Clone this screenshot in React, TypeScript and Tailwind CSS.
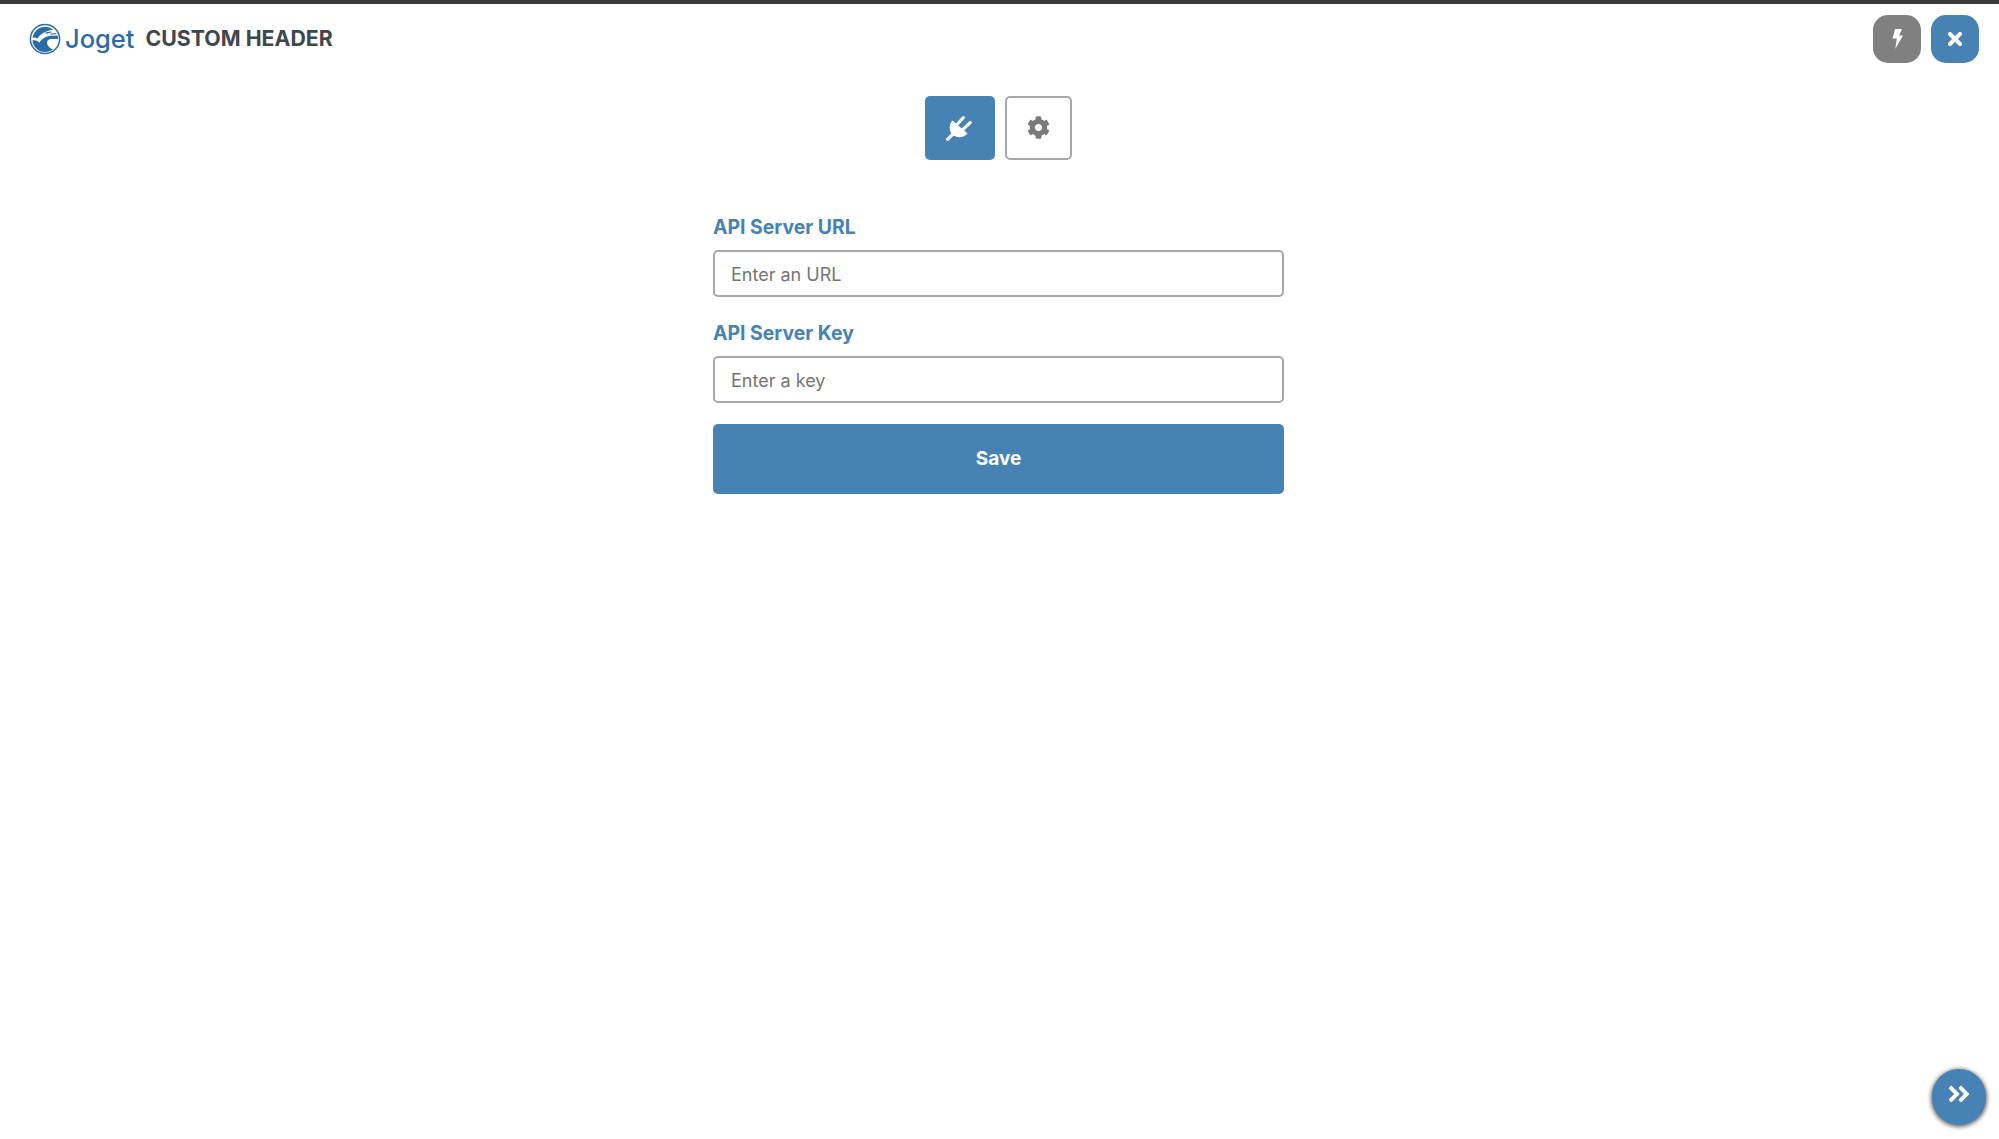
import { FaAngleDoubleRight, FaCog } from "react-icons/fa";

function JogetLogo() {
  return (
    <svg viewBox="0 0 32 32" className="h-[32px] w-[32px] shrink-0" aria-hidden="true">
      <circle cx="16" cy="16" r="14.6" fill="none" stroke="#2b6ca8" strokeWidth="1.5" />
      <path
        d="M3.5 14.5C5 8 10 3.8 16 3.8c3.2 0 6 1.1 8.2 3C19 7.4 12 10 8.5 15.5 7 14.6 5 14.3 3.5 14.5Z"
        fill="#2b6ca8"
      />
      <path
        d="M3.4 17.5c3-.9 5.6.1 7 2.2 2-4 6.6-6.6 11.6-7l6.6-.2c.3 1.1.4 2.3.4 3.5H22c-3 .2-4.8 2.6-3.6 5.4 1 2.400 3.600 4.400 5.800 5.200-2.300 1.600-5 2.500-8.200 2.500-6.600 0-11.800-5-12.600-11.600Z"
        fill="#2b6ca8"
      />
      <path d="M16 9.500l6-1 .8.800-5 1.400Zm5 1.300 6-.8.600.9-5.400.9Z" fill="#2b6ca8" />
    </svg>
  );
}

function BoltIcon() {
  return (
    <svg viewBox="0 0 11 20" className="h-[20px] w-[11px]" fill="currentColor" aria-hidden="true">
      <path d="M3 0h7L7.200 6.500H11L3.200 20l1.700-10.500H.6Z" />
    </svg>
  );
}

function CloseIcon() {
  return (
    <svg viewBox="0 0 14 14" className="h-[14px] w-[14px]" aria-hidden="true">
      <path d="M2 2l10 10M12 2 2 12" stroke="currentColor" strokeWidth="4" strokeLinecap="round" />
    </svg>
  );
}

function PlugIcon() {
  return (
    <svg viewBox="0 0 26 24" className="h-[26px] w-[28px]" fill="currentColor" aria-hidden="true">
      <path d="M6 5 20 17C17 21 10 22 6 18 2 14 3 8 6 5Z" />
      <path
        d="M1.500 22.500 7 17M10.500 8.500 16 2.500M15.500 13.500 22.500 7"
        fill="none"
        stroke="currentColor"
        strokeLinecap="round"
        strokeWidth="3"
      />
    </svg>
  );
}

function Field({ label, placeholder }: { label: string; placeholder: string }) {
  return (
    <label className="block">
      <span className="block text-[19.4px] leading-[28px] font-bold text-[#4682b4]">{label}</span>
      <input
        placeholder={placeholder}
        className="mt-[9px] block h-[47px] w-full rounded-[5px] border-2 border-[#a8a8a8] bg-white px-[16px] pt-[2px] text-[18px] text-[#333] outline-none placeholder:text-[#757575]"
      />
    </label>
  );
}

export default function App() {
  return (
    <div className="relative min-h-[1139px] border-t-[4px] border-[#3a3a3a] bg-white font-['Inter','Liberation_Sans',sans-serif]">
      <header className="flex h-[70px] items-center justify-between pr-[20px] pl-[29px]">
        <div className="flex items-center">
          <JogetLogo />
          <span className="ml-[4px] text-[25.5px] leading-none font-medium text-[#2b6ca8]">Joget</span>
          <span className="ml-[11px] text-[21.3px] leading-none font-bold text-[#3f474e]">CUSTOM HEADER</span>
        </div>
        <div className="flex gap-[10px]">
          <button className="flex h-[48px] w-[48px] items-center justify-center rounded-[15px] bg-[#808080] text-white">
            <BoltIcon />
          </button>
          <button className="flex h-[48px] w-[48px] items-center justify-center rounded-[15px] bg-[#4682b4] text-white">
            <CloseIcon />
          </button>
        </div>
      </header>

      <div className="flex justify-center pr-[2px]">
        <main className="flex w-[571px] flex-col">
          <div className="mt-[22px] flex justify-center gap-[10px]">
            <button className="flex h-[64px] w-[70px] items-center justify-center rounded-[5px] bg-[#4682b4] text-white">
              <PlugIcon />
            </button>
            <button className="flex h-[64px] w-[67px] items-center justify-center rounded-[5px] border-2 border-[#a8a8a8] bg-white pb-[1px] text-[#7a7a7a]">
              <FaCog className="text-[23px]" />
            </button>
          </div>

          <form className="mt-[53px]">
            <Field label="API Server URL" placeholder="Enter an URL" />
            <div className="mt-[22px]">
              <Field label="API Server Key" placeholder="Enter a key" />
            </div>
            <button
              type="button"
              className="mt-[21px] block h-[70px] w-full rounded-[5px] bg-[#4682b4] text-[19px] font-bold text-white"
            >
              Save
            </button>
          </form>
        </main>
      </div>

      <button className="absolute right-[13px] bottom-[14px] flex h-[56px] w-[54px] items-center justify-center rounded-full bg-[#4682b4] pb-[6px] text-[26px] text-white shadow-[0_1px_4px_1px_rgba(0,0,0,0.6)]">
        <FaAngleDoubleRight />
      </button>
    </div>
  );
}
